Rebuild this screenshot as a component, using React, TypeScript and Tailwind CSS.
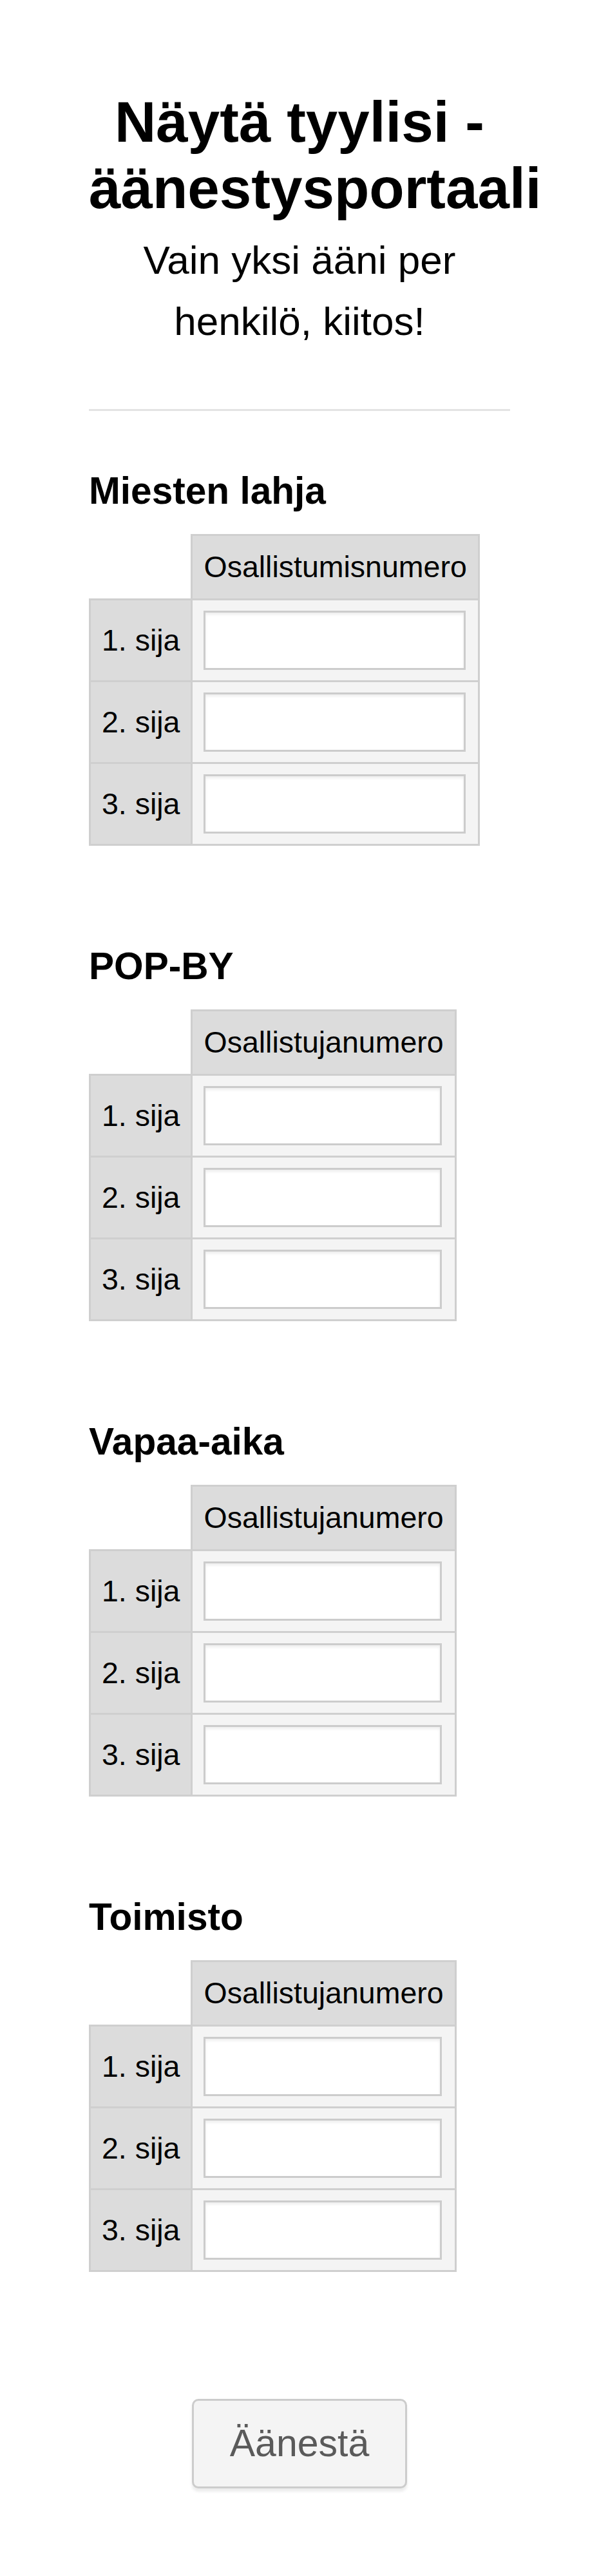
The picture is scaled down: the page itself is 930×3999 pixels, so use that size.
import React from "react";

const sections = [
    { title: "Miesten lahja", column: "Osallistumisnumero", inputWidth: "w-[407px]" },
    { title: "POP-BY", column: "Osallistujanumero", inputWidth: "w-[370px]" },
    { title: "Vapaa-aika", column: "Osallistujanumero", inputWidth: "w-[370px]" },
    { title: "Toimisto", column: "Osallistujanumero", inputWidth: "w-[370px]" },
];

const places = ["1. sija", "2. sija", "3. sija"];

function VoteTable({ column, inputWidth }: { column: string; inputWidth: string }) {
    return (
        <table className="border-collapse text-[46.5px] leading-[53px] text-black">
            <thead>
                <tr>
                    <th className="p-0" />
                    <th className="border-[3px] border-[#cfcfcf] bg-[#dcdcdc] px-[17px] py-[22px] text-left font-normal whitespace-nowrap">
                        {column}
                    </th>
                </tr>
            </thead>
            <tbody>
                {places.map((place) => (
                    <tr key={place}>
                        <td className="border-[3px] border-[#cfcfcf] bg-[#dcdcdc] px-[17px] align-middle whitespace-nowrap">
                            {place}
                        </td>
                        <td className="border-[3px] border-[#cfcfcf] bg-[#f4f4f4] px-[17px] py-[16px]">
                            <input
                                type="text"
                                size={1}
                                className={`block h-[92px] ${inputWidth} border-[3px] border-[#cccccc] bg-white shadow-[inset_0_3px_4px_rgba(0,0,0,0.07)] outline-none`}
                            />
                        </td>
                    </tr>
                ))}
            </tbody>
        </table>
    );
}

export default function App() {
    return (
        <div
            className="min-h-screen bg-white px-[138px] pt-[138px] pb-[140px] text-black"
            style={{ fontFamily: '"Liberation Sans", Arial, sans-serif' }}
        >
            <h1 className="text-center text-[89px] leading-[103px] font-bold">
                Näytä tyylisi - äänestysportaali
            </h1>
            <p className="mt-[12px] text-center text-[62px] leading-[95px]">
                Vain yksi ääni per henkilö, kiitos!
            </p>

            <div className="mt-[89px] h-[3px] bg-[#e3e3e3]" />

            {sections.map((section, i) => (
                <section key={section.title} className={i === 0 ? "mt-[90px]" : "mt-[153px]"}>
                    <h2 className="text-[58.6px] leading-[67px] font-bold">{section.title}</h2>
                    <div className="mt-[34px]">
                        <VoteTable column={section.column} inputWidth={section.inputWidth} />
                    </div>
                </section>
            ))}

            {/* Submit */}
            <div className="mt-[197px] flex justify-center">
                <button
                    type="button"
                    className="flex h-[139px] w-[334px] items-center justify-center rounded-[10px] border-[3px] border-[#cccccc] bg-[#f4f4f4] text-[59px] text-[#5a5a5a] shadow-[0_5px_4px_rgba(0,0,0,0.08)]"
                >
                    Äänestä
                </button>
            </div>
        </div>
    );
}
